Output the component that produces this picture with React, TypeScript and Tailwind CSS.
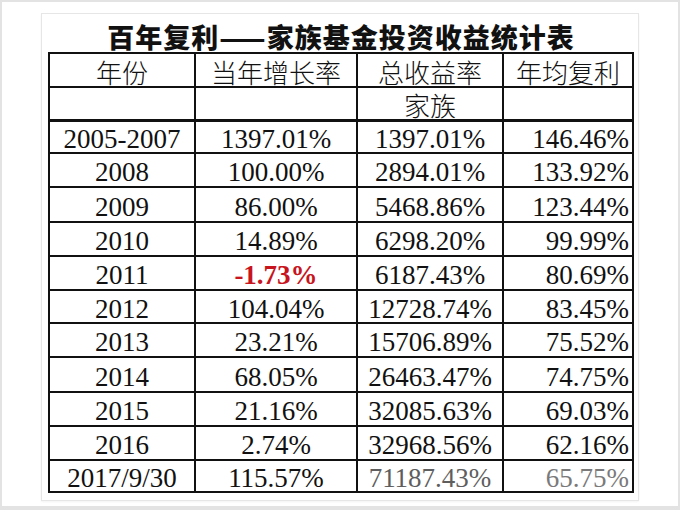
import React from "react";

type Row = {
  year: string;
  growth: string;
  total: string;
  annual: string;
  negative?: boolean;
  faded?: boolean;
  h: string;
};

const rows: Row[] = [
  { year: "2005-2007", growth: "1397.01%", total: "1397.01%", annual: "146.46%", h: "h-[32px]" },
  { year: "2008", growth: "100.00%", total: "2894.01%", annual: "133.92%", h: "h-[34px]" },
  { year: "2009", growth: "86.00%", total: "5468.86%", annual: "123.44%", h: "h-[35px]" },
  { year: "2010", growth: "14.89%", total: "6298.20%", annual: "99.99%", h: "h-[34px]" },
  { year: "2011", growth: "-1.73%", total: "6187.43%", annual: "80.69%", negative: true, h: "h-[34px]" },
  { year: "2012", growth: "104.04%", total: "12728.74%", annual: "83.45%", h: "h-[33px]" },
  { year: "2013", growth: "23.21%", total: "15706.89%", annual: "75.52%", h: "h-[34px]" },
  { year: "2014", growth: "68.05%", total: "26463.47%", annual: "74.75%", h: "h-[35px]" },
  { year: "2015", growth: "21.16%", total: "32085.63%", annual: "69.03%", h: "h-[34px]" },
  { year: "2016", growth: "2.74%", total: "32968.56%", annual: "62.16%", h: "h-[34px]" },
  { year: "2017/9/30", growth: "115.57%", total: "71187.43%", annual: "65.75%", faded: true, h: "h-[32px]" },
];

const cell = "border-r-2 border-b-2 border-[#111] flex items-center justify-center";
const cjk = "font-['Noto_Sans_CJK_SC',sans-serif] font-light text-[26px]";

const App: React.FC = () => {
  return (
    <div className="w-[680px] h-[510px] bg-[#e3e3e3] pt-[2px] px-[2px] pb-[4px] font-['Liberation_Serif','Noto_Sans_CJK_SC',serif] text-[#111]">
      <div className="h-full bg-white pl-[39px] pt-[11px]">
        <div className="w-[598px] h-[488px] border border-[#e6e6e6] bg-white pl-[6px] shadow-[0_1px_2px_rgba(0,0,0,0.05)]">
          {/* Title */}
          <div className="w-[586px] h-[38px] flex items-end justify-center">
            <h1 className="font-['Noto_Sans_CJK_SC',sans-serif] font-black text-[27px] leading-none tracking-[1px] pb-[2px]">
              百年复利——家族基金投资收益统计表
            </h1>
          </div>

          {/* Table */}
          <div className="grid grid-cols-[146px_162px_146px_130px] w-fit border-l-2 border-t-2 border-[#111] text-[27px] leading-none">
            {/* header */}
            <div className={`${cell} ${cjk} h-[34px] pt-[3px]`}>年份</div>
            <div className={`${cell} ${cjk} h-[34px] pt-[3px]`}>当年增长率</div>
            <div className={`${cell} ${cjk} h-[34px] pt-[3px]`}>总收益率</div>
            <div className={`${cell} ${cjk} h-[34px] pt-[3px]`}>年均复利</div>

            <div className={`${cell} h-[34px] border-b-[3px]`}></div>
            <div className={`${cell} h-[34px] border-b-[3px]`}></div>
            <div className={`${cell} ${cjk} h-[34px] border-b-[3px] pt-[3px]`}>家族</div>
            <div className={`${cell} h-[34px] border-b-[3px]`}></div>

            {rows.map((r) => (
              <React.Fragment key={r.year}>
                <div className={`${cell} ${r.h} pt-[5px]`}>{r.year}</div>
                <div
                  className={`${cell} ${r.h} pt-[5px] ${
                    r.negative ? "text-[#c8141c] font-bold" : ""
                  }`}
                >
                  {r.growth}
                </div>
                <div className={`${cell} ${r.h} pt-[5px] ${r.faded ? "text-[#5e5e5e]" : ""}`}>
                  {r.total}
                </div>
                <div
                  className={`${cell} ${r.h} pt-[5px] !justify-end pr-[3px] ${
                    r.faded ? "text-[#7a7a7a]" : ""
                  }`}
                >
                  {r.annual}
                </div>
              </React.Fragment>
            ))}
          </div>
        </div>
      </div>
    </div>
  );
};

export default App;
